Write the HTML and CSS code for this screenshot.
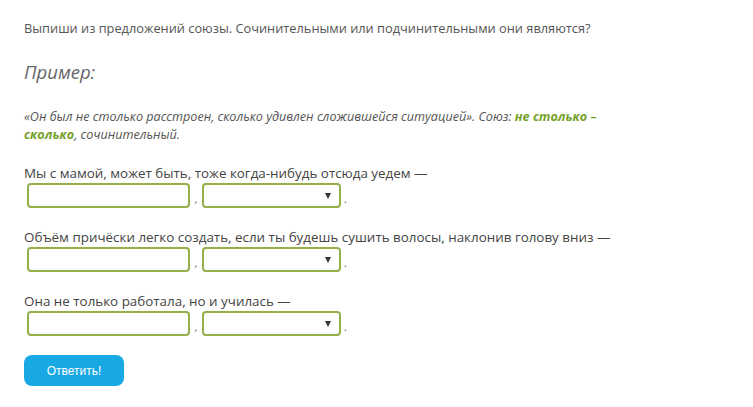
FILE: index.html
```html
<!DOCTYPE html>
<html lang="ru">
<head>
<meta charset="utf-8">
<link rel="stylesheet" href="styles.css">
</head>
<body>
<div class="task">
  <p class="question">Выпиши из предложений союзы. Сочинительными или подчинительными они являются?</p>
  <h2 class="example-title">Пример:</h2>
  <p class="example">«Он был не столько расстроен, сколько удивлен сложившейся ситуацией». Союз: <b class="hl">не столько – сколько</b>, сочинительный.</p>

  <div class="item">
    <p class="sentence">Мы с мамой, может быть, тоже когда-нибудь отсюда уедем —</p>
    <div class="row">
      <span class="field"></span><span class="comma">,</span><span class="select"><span class="arrow"></span></span><span class="dot">.</span>
    </div>
  </div>

  <div class="item">
    <p class="sentence">Объём причёски легко создать, если ты будешь сушить волосы, наклонив голову вниз —</p>
    <div class="row">
      <span class="field"></span><span class="comma">,</span><span class="select"><span class="arrow"></span></span><span class="dot">.</span>
    </div>
  </div>

  <div class="item">
    <p class="sentence">Она не только работала, но и училась —</p>
    <div class="row">
      <span class="field"></span><span class="comma">,</span><span class="select"><span class="arrow"></span></span><span class="dot">.</span>
    </div>
  </div>

  <button class="submit">Ответить!</button>
</div>
</body>
</html>
```
FILE: styles.css
```css
html, body {
  margin: 0;
  padding: 0;
  background: #ffffff;
}
body {
  font-family: "Open Sans", "Noto Sans", sans-serif;
  color: #555555;
}
.task {
  padding: 19px 24px 0 24px;
  width: 585px;
}
p, h2 {
  margin: 0;
}
.question {
  font-size: 12.8px;
  line-height: 18px;
  color: #555555;
}
.example-title {
  margin-top: 23px;
  font-size: 18.5px;
  line-height: 24px;
  font-style: italic;
  font-weight: normal;
  color: #666666;
}
.example {
  margin-top: 24px;
  font-size: 12.6px;
  line-height: 18px;
  font-style: italic;
  color: #555555;
}
.hl {
  color: #76a22b;
  font-weight: bold;
}
.item {
  margin-top: 20px;
}
.sentence {
  font-size: 13.4px;
  line-height: 18px;
  color: #444444;
  white-space: nowrap;
}
.row {
  display: flex;
  align-items: flex-end;
  height: 25px;
  margin-top: 1px;
  padding-left: 3px;
  font-size: 11px;
  color: #777777;
}
.field, .select {
  box-sizing: border-box;
  height: 25px;
  border: 2px solid #93b04a;
  border-radius: 4px;
  background: #ffffff;
  flex: none;
}
.field {
  width: 163px;
}
.comma {
  width: 12px;
  text-align: center;
  line-height: 14px;
  padding-bottom: 2px;
}
.select {
  width: 139px;
  position: relative;
}
.arrow {
  position: absolute;
  right: 8px;
  top: 8px;
  width: 0;
  height: 0;
  border-left: 3.5px solid transparent;
  border-right: 3.5px solid transparent;
  border-top: 6px solid #333333;
}
.dot {
  padding-left: 3px;
  line-height: 14px;
  padding-bottom: 2px;
  color: #555555;
}
.submit {
  display: block;
  margin-top: 19px;
  width: 100px;
  height: 31px;
  border: none;
  border-radius: 8px;
  background: #18a8e4;
  color: #ffffff;
  font-family: "Liberation Sans", Arial, sans-serif;
  font-size: 12px;
  padding: 0;
}
```
